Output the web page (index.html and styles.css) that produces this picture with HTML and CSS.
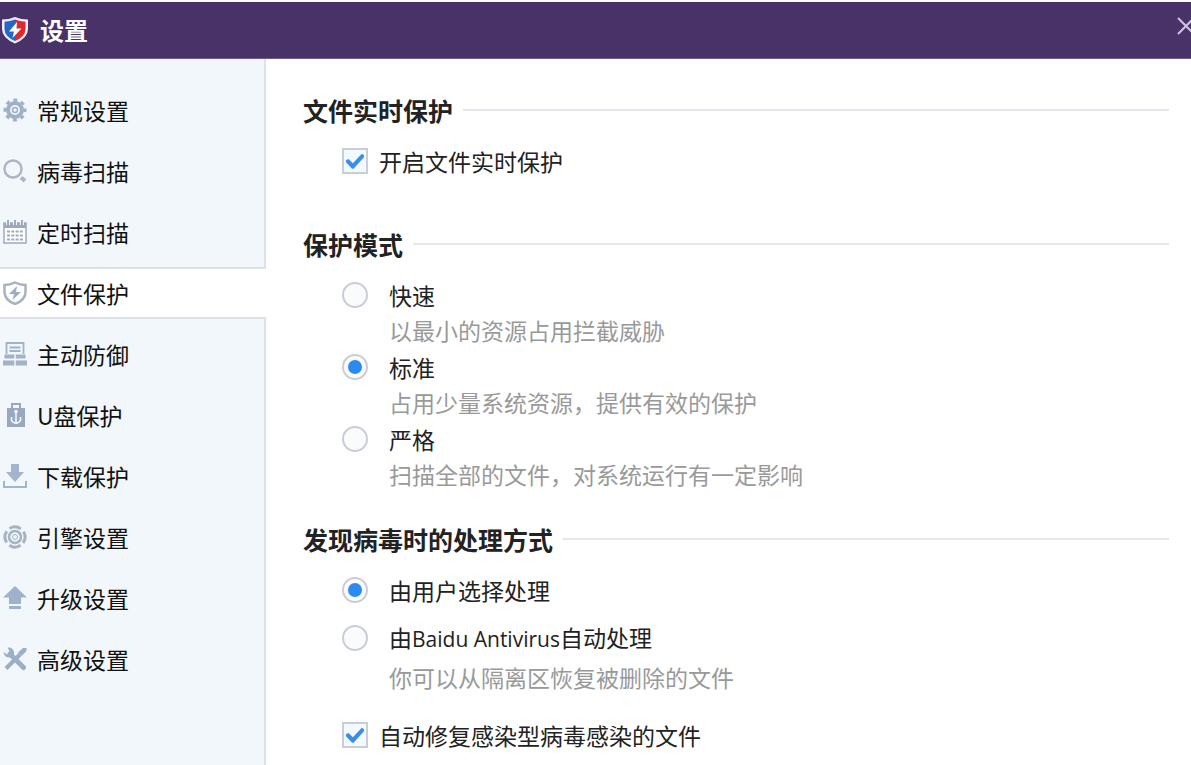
FILE: index.html
```html
<!DOCTYPE html>
<html lang="zh-CN">
<head>
  <meta charset="UTF-8">
  <meta name="viewport" content="width=device-width, initial-scale=1.0">
  <title>设置</title>
  <link rel="stylesheet" href="styles.css">
</head>
<body>
  <header class="titlebar">
    <svg class="logo" viewBox="0 0 28 28" aria-hidden="true">
      <path d="M14 1 Q20 3.500 27 3.500 V13 Q27 22 14 27.500 Q1 22 1 13 V3.500 Q8 3.500 14 1Z" fill="#f1edf6"/>
      <path d="M14 3.500 Q9 5.500 3.500 5.700 V13 Q3.500 20.500 14 25Z" fill="#2467c8"/>
      <path d="M14 3.500 Q19 5.500 24.500 5.700 V13 Q24.500 20.500 14 25Z" fill="#dc2a30"/>
      <path d="M16 6 L8 15.500 H13 L11.500 22 L20.500 12.500 H15.500Z" fill="#fff"/>
    </svg>
    <h1>设置</h1>
    <button class="close" type="button" aria-label="关闭">
      <svg viewBox="0 0 20 20"><path d="M2 2 L18 18 M18 2 L2 18" fill="none" stroke="#cfc4e0" stroke-width="2"/></svg>
    </button>
  </header>

  <div class="layout">
    <nav class="sidebar">
      <a href="#general">
        <svg viewBox="0 0 24 24">
          <g fill="none" stroke="#9fb1c6">
            <circle cx="12" cy="12" r="10" stroke-width="3" stroke-dasharray="3.927 3.927" stroke-dashoffset="1.960"/>
            <circle cx="12" cy="12" r="7" stroke-width="4"/>
            <circle cx="12" cy="12" r="2.500" stroke-width="1.500"/>
          </g>
        </svg>
        <span>常规设置</span>
      </a>
      <a href="#scan">
        <svg viewBox="0 0 24 24">
          <circle cx="10" cy="10" r="8.500" fill="none" stroke="#adb5c6" stroke-width="2.500"/>
          <path d="M18 18.500 L22 22" stroke="#adb5c6" stroke-width="4"/>
        </svg>
        <span>病毒扫描</span>
      </a>
      <a href="#schedule">
        <svg viewBox="0 0 24 24">
          <path d="M1 3 H23 V23 H1Z" fill="#fff" stroke="#9daabd" stroke-width="1.500"/>
          <path d="M1 3 H23 V8 H1Z" fill="#9daabd"/>
          <path d="M5 0 V5 M12 0 V5 M19 0 V5" stroke="#f1f7fa" stroke-width="4"/>
          <path d="M5 0 V5 M12 0 V5 M19 0 V5" stroke="#9daabd" stroke-width="2"/>
          <path d="M4 11.500 H20 M4 15.500 H20 M4 19.500 H20" stroke="#9daabd" stroke-width="2" stroke-dasharray="3 1.300"/>
        </svg>
        <span>定时扫描</span>
      </a>
      <a class="active" href="#file" aria-current="page">
        <svg viewBox="0 0 24 24">
          <path d="M12 1.500 Q17 4 22.500 4 V11 Q22.500 19 12 23 Q1.500 19 1.500 11 V4 Q7 4 12 1.500Z" fill="none" stroke="#a6b1c3" stroke-width="2.500"/>
          <path d="M14 5 L6 13 H11 L9.500 19 L18 11 H13Z" fill="#9cadc6"/>
        </svg>
        <span>文件保护</span>
      </a>
      <a href="#defense">
        <svg viewBox="0 0 24 24">
          <path d="M3.500 12 V1 H20.500 V12" fill="none" stroke="#a3b2c6" stroke-width="1.800"/>
          <path d="M6.500 5.500 H17.500 M6.500 9 H17.500" stroke="#a3b2c6" stroke-width="1.800"/>
          <path d="M1.500 12.500 H22.500 V16.500 H1.500Z M0 18.500 H24 V23.500 H0Z" fill="#a3b2c6"/>
          <path d="M12 12 V24" stroke="#f1f7fa" stroke-width="1.500"/>
        </svg>
        <span>主动防御</span>
      </a>
      <a href="#usb">
        <svg viewBox="0 0 24 24">
          <path d="M9 5 V1 H17 V5" fill="none" stroke="#98a9bf" stroke-width="2"/>
          <path d="M4 5 H22 V24 H4Z" fill="#98a9bf"/>
          <g fill="none" stroke="#f1f7fa" stroke-width="1.600">
            <path d="M13 9 V21 M8.500 14 V17 Q8.500 19 13 20.500 Q17.500 19 17.500 17 V14"/>
            <circle cx="13" cy="8.500" r="1"/>
          </g>
        </svg>
        <span>U盘保护</span>
      </a>
      <a href="#download">
        <svg viewBox="0 0 24 24">
          <path d="M8 0 H16 V8 H21 L12 18 L3 8 H8Z" fill="#a3b5cc"/>
          <path d="M1 17 V23 H23 V17" fill="none" stroke="#a3b5cc" stroke-width="2"/>
        </svg>
        <span>下载保护</span>
      </a>
      <a href="#engine">
        <svg viewBox="0 0 24 24">
          <g fill="none" stroke="#a5b3c5">
            <circle cx="12" cy="12" r="10" stroke-width="3" stroke-dasharray="11.700 4" stroke-dashoffset="-2" transform="rotate(45 12 12)"/>
            <circle cx="12" cy="12" r="6" stroke-width="2.500"/>
            <circle cx="12" cy="12" r="2.500" stroke-width="1"/>
          </g>
        </svg>
        <span>引擎设置</span>
      </a>
      <a href="#upgrade">
        <svg viewBox="0 0 24 24">
          <path d="M12 0 L24 11.500 H18 V18 H6 V11.500 H0Z M6 20 H18 V23 H6Z" fill="#9fb2cc"/>
        </svg>
        <span>升级设置</span>
      </a>
      <a href="#advanced">
        <svg viewBox="0 0 24 24">
          <path d="M3 21.500 L17 7.500" stroke="#9bb0c8" stroke-width="4"/>
          <path d="M15 5.500 L20 1 L23.500 1 V4 L18.500 9Z" fill="#9bb0c8"/>
          <path d="M7 7 L20.500 20.500" stroke="#9bb0c8" stroke-width="5" stroke-linecap="round"/>
          <path d="M4.500 0.500 Q10 0 11 5 L11 8 L8 10.500 Q1 11 0.500 5 L4 7.500 L7 5Z" fill="#9bb0c8"/>
        </svg>
        <span>高级设置</span>
      </a>
    </nav>

    <main class="content">
      <section class="group">
        <h2>文件实时保护</h2>
        <div class="option check">
          <input type="checkbox" id="realtime" checked>
          <label for="realtime">开启文件实时保护</label>
        </div>
      </section>

      <section class="group">
        <h2>保护模式</h2>
        <div class="option">
          <input type="radio" name="mode" id="fast" aria-describedby="fast-note">
          <label for="fast">快速</label>
          <p id="fast-note">以最小的资源占用拦截威胁</p>
        </div>
        <div class="option">
          <input type="radio" name="mode" id="standard" aria-describedby="standard-note" checked>
          <label for="standard">标准</label>
          <p id="standard-note">占用少量系统资源，提供有效的保护</p>
        </div>
        <div class="option">
          <input type="radio" name="mode" id="strict" aria-describedby="strict-note">
          <label for="strict">严格</label>
          <p id="strict-note">扫描全部的文件，对系统运行有一定影响</p>
        </div>
      </section>

      <section class="group actions">
        <h2>发现病毒时的处理方式</h2>
        <div class="option">
          <input type="radio" name="action" id="ask" checked>
          <label for="ask">由用户选择处理</label>
        </div>
        <div class="option">
          <input type="radio" name="action" id="auto" aria-describedby="auto-note">
          <label for="auto">由<span class="latin">Baidu Antivirus</span>自动处理</label>
          <p id="auto-note">你可以从隔离区恢复被删除的文件</p>
        </div>
        <div class="option check repair">
          <input type="checkbox" id="repair" checked>
          <label for="repair">自动修复感染型病毒感染的文件</label>
        </div>
      </section>
    </main>
  </div>
</body>
</html>
```
FILE: styles.css
```css
* {
  box-sizing: border-box;
}

body {
  margin: 0;
  min-height: 100vh;
  display: flex;
  flex-direction: column;
  overflow-x: hidden;
  border-top: 2px solid #fff;
  background: #fff;
  color: #222;
  font-family: "Noto Sans CJK SC", sans-serif;
  font-size: 23px;
  line-height: 36px;
}

h1,
h2,
p {
  margin: 0;
}

.titlebar {
  display: flex;
  align-items: center;
  height: 57px;
  overflow: hidden;
  background: #493267;
  border-bottom: 1px solid #6c5a87;
}

.logo {
  width: 28px;
  height: 28px;
  margin: 0 11px 0 1px;
}

.titlebar h1 {
  color: #fff;
  font-size: 24px;
  font-weight: bold;
}

/* the close button runs past the window edge */
.close {
  width: 20px;
  height: 20px;
  margin: 0 -5px 8px auto;
  padding: 0;
  border: none;
  background: none;
  cursor: pointer;
}

.close svg {
  display: block;
}

.layout {
  display: flex;
  flex: 1;
}

.sidebar {
  display: flex;
  flex-direction: column;
  gap: 9px;
  flex: 0 0 266px;
  padding-top: 25px;
  background: #f1f7fa;
  border-right: 2px solid #dbe1e7;
}

.sidebar a {
  display: flex;
  align-items: center;
  gap: 10px;
  height: 52px;
  padding-left: 3px;
  color: #111;
  text-decoration: none;
}

.sidebar a.active {
  margin-right: -2px;
  background: #fff;
  border-top: 2px solid #dbe1e7;
  border-bottom: 2px solid #dbe1e7;
}

.sidebar svg {
  width: 24px;
  height: 24px;
}

.content {
  flex: 1;
  padding: 33px 22px 12px 37px;
}

.group + .group {
  margin-top: 47px;
}

.group + .actions {
  margin-top: 28px;
}

.group h2 {
  display: flex;
  align-items: center;
  gap: 10px;
  margin-bottom: 15px;
  font-size: 25px;
  font-weight: bold;
}

.group h2::after {
  content: "";
  flex: 1;
  height: 2px;
  background: #e5e6ee;
}

.option {
  display: grid;
  grid-template-columns: 26px 1fr;
  column-gap: 21px;
  align-items: center;
  padding-left: 39px;
}

.option.check {
  column-gap: 11px;
}

.option p {
  grid-column: 2;
  padding-bottom: 2px;
  color: #999;
  line-height: 34px;
}

.actions .option + .option {
  margin-top: 11px;
}

.actions p {
  margin-top: 3px;
}

.actions .option.repair {
  margin-top: 21px;
}

.latin {
  font-family: "Open Sans", sans-serif;
  font-size: 21px;
}

input {
  appearance: none;
  display: grid;
  place-items: center;
  width: 26px;
  height: 26px;
  margin: 0;
  border: 2px solid #c9cdd8;
  background: #fafbfd;
}

input[type="radio"] {
  border-radius: 50%;
}

input[type="checkbox"]:checked {
  background: #f3faff;
}

input[type="radio"]:checked::before {
  content: "";
  width: 14px;
  height: 14px;
  border-radius: 50%;
  background: #2b8af0;
}

input[type="checkbox"]:checked::before {
  content: "";
  width: 18px;
  height: 16px;
  background: #3a8eea;
  clip-path: polygon(0 45%, 14% 38%, 38% 64%, 88% 4%, 100% 14%, 100% 26%, 42% 98%, 34% 98%, 0 58%);
}
```
